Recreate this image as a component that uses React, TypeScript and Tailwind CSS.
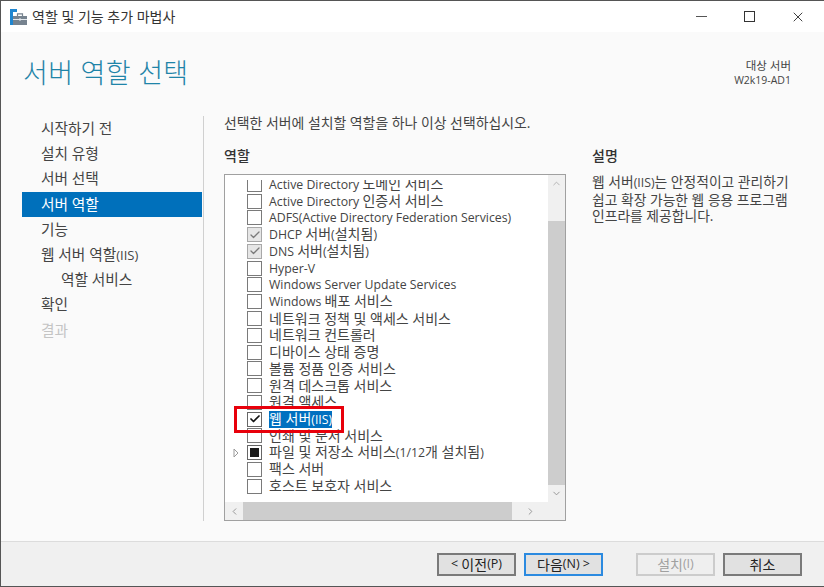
import { Check, ChevronDown, ChevronLeft, ChevronRight, ChevronUp, X } from "lucide-react";

const steps = [
  { label: "시작하기 전" },
  { label: "설치 유형" },
  { label: "서버 선택" },
  { label: "서버 역할", active: true },
  { label: "기능" },
  { label: "웹 서버 역할(IIS)" },
  { label: "역할 서비스", indent: true },
  { label: "확인" },
  { label: "결과", disabled: true },
];

const roles = [
  { label: "Active Directory 노메인 서비스" },
  { label: "Active Directory 인증서 서비스" },
  { label: "ADFS(Active Directory Federation Services)" },
  { label: "DHCP 서버(설치됨)", state: "installed" },
  { label: "DNS 서버(설치됨)", state: "installed" },
  { label: "Hyper-V" },
  { label: "Windows Server Update Services" },
  { label: "Windows 배포 서비스" },
  { label: "네트워크 정책 및 액세스 서비스" },
  { label: "네트워크 컨트롤러" },
  { label: "디바이스 상태 증명" },
  { label: "볼륨 정품 인증 서비스" },
  { label: "원격 데스크톱 서비스" },
  { label: "원격 액세스" },
  { label: "웹 서버(IIS)", state: "checked" },
  { label: "인쇄 및 문서 서비스" },
  { label: "파일 및 저장소 서비스(1/12개 설치됨)", state: "partial" },
  { label: "팩스 서버" },
  { label: "호스트 보호자 서비스" },
];

const Mixed = ({ text, latin = "text-[12.3px]" }: { text: string; latin?: string }) => (
  <>
    {text.split(/([A-Za-z0-9()/<>-][A-Za-z0-9()/<> -]*)/).map((part, i) =>
      i % 2 === 1 ? (
        <span key={i} className={latin}>
          {part}
        </span>
      ) : (
        part
      )
    )}
  </>
);

const RoleCheck = ({ state }: { state?: string }) => {
  if (state === "installed") {
    return (
      <span className="flex h-[15px] w-[15px] shrink-0 items-center justify-center border border-[#a8a8a8] bg-[#e6e6e6]">
        <Check size={12} strokeWidth={2.5} className="text-[#7a7a7a]" />
      </span>
    );
  }
  if (state === "checked") {
    return (
      <span className="flex h-[15px] w-[15px] shrink-0 items-center justify-center border border-[#666] bg-white">
        <Check size={12} strokeWidth={3.5} className="text-[#111]" />
      </span>
    );
  }
  if (state === "partial") {
    return (
      <span className="flex h-[15px] w-[15px] shrink-0 items-center justify-center border border-[#666] bg-white">
        <span className="h-[9px] w-[9px] bg-[#1a1a1a]" />
      </span>
    );
  }
  return <span className="h-[15px] w-[15px] shrink-0 border border-[#7a7a7a] bg-white" />;
};

const FooterButton = ({ label, variant }: { label: string; variant?: string }) => {
  let cls = "border-[#7a7a7a] bg-[#e1e1e1] text-[#222]";
  if (variant === "default") cls = "border-[#2b8ae0] bg-[#e1e1e1] text-[#222]";
  if (variant === "disabled") cls = "border-[#cccccc] bg-[#efefef] text-[#a0a0a0]";
  return (
    <button className={`flex h-[23px] w-[79px] items-center justify-center whitespace-pre border-2 text-[14px] ${cls}`}>
      <Mixed text={label} latin="text-[12.5px]" />
    </button>
  );
};

export default function App() {
  return (
    <div
      className="flex h-[587px] w-[824px] flex-col border-t border-b border-l border-[#555] bg-[#fafafa] text-[14px] text-[#333]"
      style={{ fontFamily: '"Open Sans", "Noto Sans CJK KR", sans-serif' }}
    >
      {/* title bar */}
      <div className="flex h-[31px] shrink-0 items-center bg-white pl-[9px]">
        <svg width="17" height="16" viewBox="0 0 17 16" className="mr-[5px] shrink-0">
          <path d="M0 0h7v3H3v13H0z" fill="#1f86d0" />
          <path d="M3 7h14v9H3z" fill="#76838f" />
          <path d="M7.5 7V4.8h5V7" fill="none" stroke="#76838f" strokeWidth="1.2" />
          <path d="M3 10.5h14" stroke="#e4e9ee" strokeWidth="1" />
          <path d="M9 9.5h2v2H9z" fill="#e4e9ee" />
        </svg>
        <span className="text-[14px] text-[#333]">역할 및 기능 추가 마법사</span>
        <div className="ml-auto flex items-center pr-[18px] text-[#333]">
          <span className="h-[1.5px] w-[11px] bg-[#555]" />
          <span className="ml-[37px] h-[11px] w-[11px] border-[1.5px] border-[#333]" />
          <X size={16} strokeWidth={1.4} className="ml-[35px]" />
        </div>
      </div>

      {/* header */}
      <div className="flex h-[77px] shrink-0 items-start justify-between pl-[22px] pr-[33px]">
        <h1 className="mt-[21px] text-[27px] font-light leading-[40px] tracking-[0.3px] text-[#1f84a8]">서버 역할 선택</h1>
        <div className="mt-[26px] text-right text-[11.5px] leading-[15px] text-[#444]">
          <div>대상 서버</div>
          <div className="text-[10.5px]">W2k19-AD1</div>
        </div>
      </div>

      {/* body */}
      <div className="flex min-h-0 flex-1">
        <nav className="mt-[7px] h-[405px] w-[181px] shrink-0 pl-[21px]">
          {steps.map((s) => (
            <div
              key={s.label}
              className={`h-[25.2px] w-[180px] text-[14.7px] leading-[25.2px] ${s.indent ? "pl-[39px]" : "pl-[19px]"} ${
                s.active ? "bg-[#0070bb] text-white" : s.disabled ? "text-[#c4c4c4]" : "text-[#444]"
              }`}
            >
              <Mixed text={s.label} latin="text-[13px]" />
            </div>
          ))}
        </nav>

        <div className="mt-[7px] ml-[21px] h-[405px] w-[1px] bg-[#d0d0d0]" />

        <div className="ml-[20px] flex-1">
          <p className="mt-[5px] text-[13.9px] leading-[18px] text-[#444]">
            선택한 서버에 설치할 역할을 하나 이상 선택하십시오.
          </p>
          <div className="mt-[15px] flex">
            <div className="w-[342px] shrink-0">
              <div className="h-[27px] text-[14px] font-medium leading-[18px] text-[#333]">역할</div>
              <div className="flex h-[347px] w-[342px] flex-col border border-[#a0a0a0] bg-white">
                <div className="flex min-h-0 flex-1">
                  <div className="min-w-0 flex-1 overflow-hidden pt-[5px]">
                    <div className="h-full overflow-hidden">
                      <div className="-mt-[4px]">
                        {roles.map((r) => (
                          <div key={r.label} className="relative flex h-[16.78px] items-center pl-[22px]">
                            {r.state === "partial" && (
                              <svg width="6" height="10" viewBox="0 0 6 10" className="absolute left-[8px] top-[4px]">
                                <path d="M1 1l4 4-4 4z" fill="none" stroke="#9a9a9a" />
                              </svg>
                            )}
                            <RoleCheck state={r.state} />
                            <span
                              className={`ml-[7px] whitespace-pre text-[14px] leading-[16px] ${
                                r.state === "checked" ? "bg-[#0070c0] text-white" : "text-[#444]"
                              }`}
                            >
                              <Mixed text={r.label} />
                            </span>
                          </div>
                        ))}
                      </div>
                    </div>
                  </div>
                  <div className="flex w-[17px] shrink-0 flex-col bg-[#f0f0f0]">
                    <div className="flex h-[17px] items-center justify-center">
                      <ChevronUp size={11} className="text-[#b0b0b0]" />
                    </div>
                    <div className="mt-[29px] flex-1 bg-[#cdcdcd]" />
                    <div className="flex h-[17px] items-center justify-center">
                      <ChevronDown size={11} className="text-[#909090]" />
                    </div>
                  </div>
                </div>
                <div className="flex h-[18px] shrink-0 items-center bg-[#f0f0f0]">
                  <div className="flex h-full w-[18px] items-center justify-center">
                    <ChevronLeft size={11} className="text-[#909090]" />
                  </div>
                  <div className="h-full w-[269px] bg-[#cdcdcd]" />
                  <div className="flex h-full w-[36px] items-center justify-center">
                    <ChevronRight size={11} className="text-[#909090]" />
                  </div>
                </div>
              </div>
            </div>
            <div className="ml-[26px] w-[205px]">
              <div className="h-[27px] text-[14px] font-medium leading-[18px] text-[#333]">설명</div>
              <p className="text-[13.8px] leading-[16.5px] text-[#444]">
                <Mixed text="웹 서버(IIS)는 안정적이고 관리하기" />
                <br />
                쉽고 확장 가능한 웹 응용 프로그램
                <br />
                인프라를 제공합니다.
              </p>
            </div>
          </div>
        </div>
      </div>

      {/* footer */}
      <div className="flex h-[45px] shrink-0 items-center border-t border-[#dcdcdc] bg-[#f0f0f0] pl-[436px]">
        <FooterButton label="< 이전(P)" />
        <div className="ml-[8px]">
          <FooterButton label="다음(N) >" variant="default" />
        </div>
        <div className="ml-[33px]">
          <FooterButton label="설치(I)" variant="disabled" />
        </div>
        <div className="ml-[8px]">
          <FooterButton label="취소" />
        </div>
      </div>

      {/* highlight drawn on the screenshot */}
      <div className="pointer-events-none absolute left-[234px] top-[406px] h-[27px] w-[110px] border-[3px] border-[#e8000b]" />
    </div>
  );
}
